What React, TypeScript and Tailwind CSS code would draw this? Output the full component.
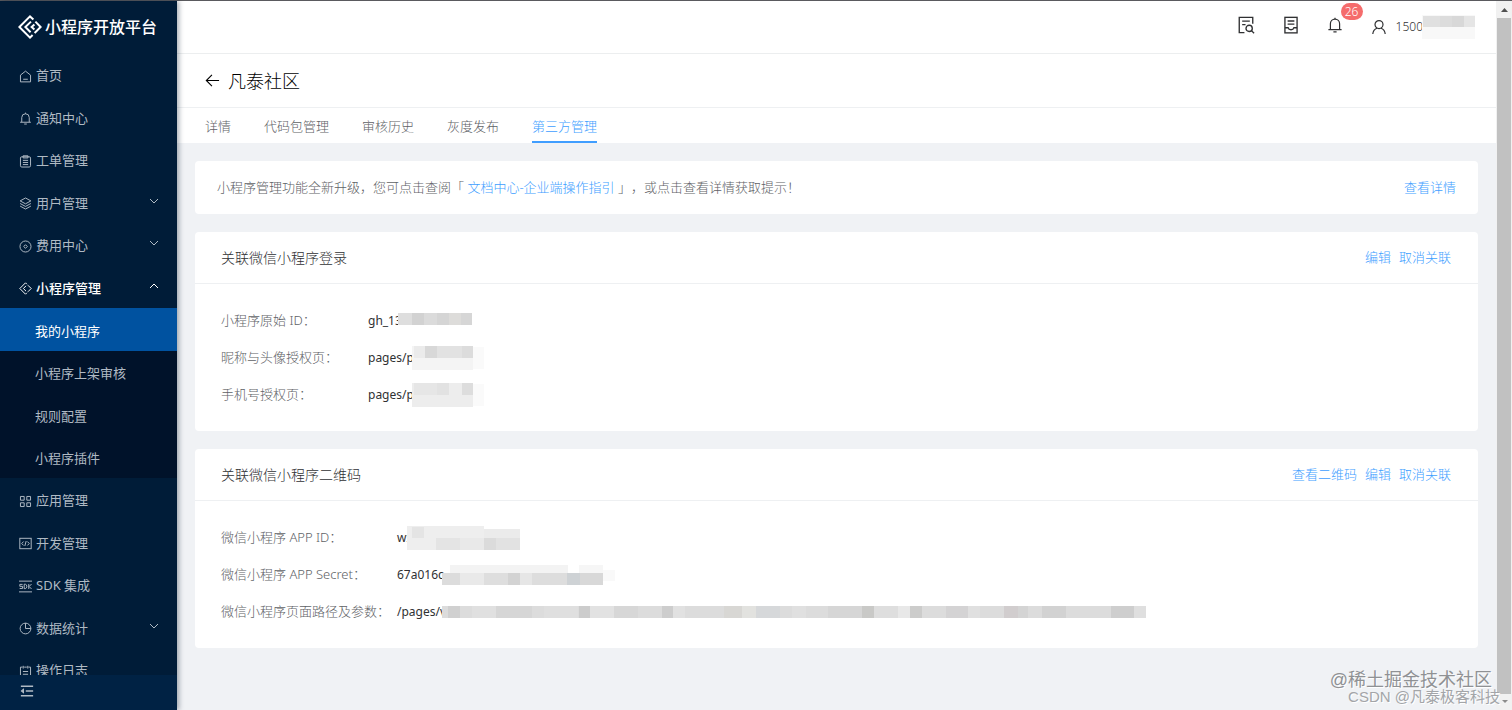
import type { ReactNode } from 'react';

type IconName =
  | 'home' | 'bell' | 'clipboard' | 'layers' | 'target' | 'diamond' | 'grid'
  | 'code' | 'sdk' | 'pie' | 'calendar' | 'collapse' | 'docSearch' | 'docInbox' | 'user' | 'back';

const paths: Record<IconName, ReactNode> = {
  home: (
    <>
      <path d="M1.8 6.3 8 1.4l6.2 4.9v8.3H1.8z" />
      <path d="M5.2 11.4h5.6" />
    </>
  ),
  bell: (
    <>
      <path d="M3.4 12.4V6.8a4.6 4.6 0 0 1 9.2 0v5.6" />
      <path d="M1.4 12.6h13.2M6.4 14.8h3.2M8 .8v1.4" />
    </>
  ),
  clipboard: (
    <>
      <rect x="1.8" y="2.2" width="12.4" height="12.6" rx="1.6" />
      <path d="M5 1h6v2.6H5zM4.8 6.6h6.4M4.8 9.2h6.4M4.8 11.8h6.4" />
    </>
  ),
  layers: (
    <>
      <path d="M8 1.2 14.6 4.8 8 8.4 1.4 4.8z" />
      <path d="M1.4 8 8 11.6 14.6 8M1.4 11.2 8 14.8l6.6-3.6" />
    </>
  ),
  target: (
    <>
      <circle cx="8" cy="8" r="6.8" />
      <path d="M8 5.8 10.2 8 8 10.2 5.8 8z" />
    </>
  ),
  diamond: (
    <>
      <path d="M9.8 2.8 8 1 1 8l7 7 1.800-1.800" />
      <path d="M8.600 4.800 5.400 8l3.200 3.200M11 4l4 4-4 4" />
    </>
  ),
  grid: (
    <path d="M1.8 1.8h4.6v4.6H1.8zM9.6 1.8h4.6v4.6H9.6zM1.8 9.6h4.6v4.6H1.8zM9.6 9.6h4.6v4.6H9.6z" />
  ),
  code: (
    <>
      <rect x="1" y="1.6" width="14" height="12.8" />
      <path d="M5.6 5.6 3.4 8l2.2 2.4M10.4 5.6 12.6 8l-2.2 2.4M8.8 5l-1.6 6" />
    </>
  ),
  sdk: (
    <>
      <path d="M0 1.4h16M0 14.6h16" />
      <path d="M4.4 5.4H1v2.4h3.4v2.6H.8M6.4 5.2v5.4h1.4c2.4 0 2.4-5.4 0-5.4zM12 5v6M15.4 5 12.4 8l3 3" />
    </>
  ),
  pie: (
    <>
      <path d="M8 1.400A6.600 6.600 0 1 0 14.600 8H8z" />
      <path d="M8 1.400A6.600 6.600 0 0 1 14.600 8" />
    </>
  ),
  calendar: (
    <>
      <path d="M4.4 2.6H1.8v12.6h12.4V2.6h-2.6M6.4 2.6h3.2" />
      <path d="M5.2 1v3.4M10.8 1v3.4M4.8 8h6.4M4.8 11.4h6.4" />
    </>
  ),
  collapse: (
    <>
      <path d="M1 2.500h14M6.600 8H15M1 13.500h14" strokeWidth="1.600" />
      <path d="M4 6 1.600 8 4 10z" fill="currentColor" />
    </>
  ),
  docSearch: (
    <>
      <path d="M6.6 14.8H2V1.2h12v5.6" />
      <path d="M4.6 4.6h6.8M4.6 7.6h3" />
      <circle cx="10.8" cy="11" r="2.8" />
      <path d="m12.8 13 2.4 2.4" />
    </>
  ),
  docInbox: (
    <>
      <rect x="2.600" y="1.2" width="10.800" height="13.8" />
      <path d="M5 4.4h6M5 7.2h6M2.600 10.400h2.800c.6 2.400 4.600 2.400 5.200 0h2.800" />
    </>
  ),
  user: (
    <>
      <circle cx="8" cy="5.6" r="4" />
      <path d="M1.8 15c.2-3 2-5 4.2-5.8M14.2 15c-.2-3-2-5-4.2-5.8" />
    </>
  ),
  back: <path d="M15 8H1.6M7.4 2 1.4 8l6 6" />,
};

function Icon({ name, className }: { name: IconName; className: string }) {
  return (
    <svg
      viewBox="0 0 16 16"
      className={className}
      fill="none"
      stroke="currentColor"
      strokeWidth="1.2"
      aria-hidden="true"
    >
      {paths[name]}
    </svg>
  );
}

interface MenuItem {
  icon: IconName;
  label: string;
  expandable?: boolean;
  children?: string[];
}

const menu: MenuItem[] = [
  { icon: 'home', label: '首页' },
  { icon: 'bell', label: '通知中心' },
  { icon: 'clipboard', label: '工单管理' },
  { icon: 'layers', label: '用户管理', expandable: true },
  { icon: 'target', label: '费用中心', expandable: true },
  {
    icon: 'diamond',
    label: '小程序管理',
    expandable: true,
    children: ['我的小程序', '小程序上架审核', '规则配置', '小程序插件'],
  },
  { icon: 'grid', label: '应用管理' },
  { icon: 'code', label: '开发管理' },
  { icon: 'sdk', label: 'SDK 集成' },
  { icon: 'pie', label: '数据统计', expandable: true },
  { icon: 'calendar', label: '操作日志' },
];

const tabs = ['详情', '代码包管理', '审核历史', '灰度发布', '第三方管理'];
const activeTab = '第三方管理';

// x, y, width, height, fill
type Block = [number, number, number, number, string];

interface MaskShape {
  width: number;
  height: number;
  blocks: Block[];
}

const masks: Record<string, MaskShape> = {
  phone: {
    width: 54,
    height: 24,
    blocks: [
      [0, 0, 53, 24, '#f8f8f8'], [1, 1, 17, 11, '#e0e0e0'], [18, 1, 12, 11, '#dcdcdc'],
      [30, 1, 12, 11, '#d8d8d8'], [42, 1, 11, 11, '#e5e5e5'],
    ],
  },
  origin: {
    width: 75,
    height: 12,
    blocks: [
      [0, 0, 14, 12, '#dedede'], [14, 0, 12, 12, '#d2d2d2'], [26, 0, 13, 12, '#dbdbdb'],
      [39, 0, 12, 12, '#d5d5d5'], [51, 0, 12, 12, '#dddcda'], [63, 0, 11, 12, '#d6d6d6'],
    ],
  },
  profile: {
    width: 72,
    height: 24,
    blocks: [
      [0, 0, 61, 24, '#f4f4f4'], [61, 1, 11, 22, '#fafafa'], [2, 0, 11, 12, '#ebebeb'],
      [13, 0, 12, 12, '#d8d8d8'], [25, 0, 25, 12, '#e2e2e2'], [50, 0, 11, 12, '#dcdcdc'],
    ],
  },
  mobile: {
    width: 72,
    height: 24,
    blocks: [
      [0, 0, 61, 24, '#ededed'], [61, 1, 11, 22, '#fafafa'], [2, 0, 23, 12, '#e6e6e6'],
      [25, 0, 12, 12, '#e2e2e2'], [50, 0, 11, 12, '#dddddd'],
    ],
  },
  appId: {
    width: 114,
    height: 24,
    blocks: [
      [0, 0, 77, 24, '#eeeeee'], [77, 3, 36, 21, '#ebebeb'], [5, 1, 12, 11, '#e4e4e4'],
      [29, 12, 24, 12, '#e4e4e4'], [53, 12, 24, 12, '#e9e9e9'], [77, 12, 12, 12, '#dbdbdb'],
      [89, 12, 24, 12, '#e2e2e2'],
    ],
  },
  secret: {
    width: 174,
    height: 20,
    blocks: [
      [8, 0, 118, 20, '#f3f3f3'], [137, 0, 24, 12, '#f6f6f6'], [161, 5, 12, 11, '#f9f9f9'],
      [0, 8, 18, 12, '#dcdcdc'], [18, 8, 24, 12, '#e9e9e9'], [42, 8, 24, 12, '#dedede'],
      [66, 8, 12, 12, '#d3d3d3'], [78, 8, 12, 12, '#e6e6e6'], [90, 8, 35, 12, '#dddddd'],
      [125, 8, 13, 12, '#ced2d5'], [138, 8, 23, 12, '#d8d8d8'],
    ],
  },
  path: {
    width: 704,
    height: 12,
    blocks: [
      [0, 0, 704, 12, '#dcdcdc'], [6, 0, 12, 12, '#d0d0d0'], [30, 0, 24, 12, '#e0e0e0'],
      [54, 0, 36, 12, '#d6d6d6'], [102, 0, 34, 12, '#dfdfdf'], [137, 0, 11, 12, '#cccccc'],
      [148, 0, 24, 12, '#e2e2e2'], [172, 0, 24, 12, '#d7d7d7'], [220, 0, 11, 12, '#cdcdcd'],
      [231, 0, 12, 12, '#e1e1e1'], [282, 0, 18, 12, '#d8d7d4'], [300, 0, 14, 12, '#e2e2df'],
      [314, 0, 24, 12, '#d6d8da'], [350, 0, 14, 12, '#e0e0e0'], [386, 0, 34, 12, '#d6d6d6'],
      [420, 0, 12, 12, '#c9c9c7'], [432, 0, 24, 12, '#dedede'], [456, 0, 12, 12, '#e8e8e8'],
      [468, 0, 12, 12, '#cccccb'], [504, 0, 22, 12, '#d4d3d4'], [526, 0, 12, 12, '#e0e0e0'],
      [562, 0, 14, 12, '#d1cdce'], [576, 0, 10, 12, '#d4d4d4'], [600, 0, 24, 12, '#d2d2d2'],
      [669, 0, 23, 12, '#cecece'], [692, 0, 12, 12, '#dfdfdf'],
    ],
  },
};

// Redacted part of a value, drawn over the tail of its visible text
function Mask({ name, className }: { name: string; className: string }) {
  const { width, height, blocks } = masks[name];
  return (
    <svg width={width} height={height} className={`relative shrink-0 ${className}`} aria-hidden="true">
      {blocks.map(([x, y, w, h, fill], i) => (
        <rect key={i} x={x} y={y} width={w} height={h} fill={fill} />
      ))}
    </svg>
  );
}

function Sidebar() {
  return (
    <aside className="relative z-10 flex w-[177px] shrink-0 flex-col bg-[#001c38] text-[13px] text-[#b0bac4] shadow-[2px_0_5px_rgba(0,21,41,0.35)]">
      <div className="flex h-[52px] shrink-0 items-center gap-[3px] pl-[18px] text-white">
        <svg viewBox="0 0 24 24" className="size-6" fill="none" stroke="currentColor" strokeWidth="2" aria-hidden="true">
          <path d="M15.400 4.600 12 1.400 1.400 12 12 22.600l2.600-2.600" />
          <path d="M13 6.600 7.400 12l5.200 5.200M16.400 9.400 13.600 12l2.800 2.600" />
          <path d="M17.400 6.600 22.600 12l-6 6" />
        </svg>
        <span className="text-base font-medium">小程序开放平台</span>
      </div>

      <nav className="min-h-0 flex-1 overflow-hidden">
        <ul>
          {menu.map((item) => (
            <li key={item.label} className="group">
              <a
                href="#"
                className={`flex h-[42px] items-center gap-1 pt-1 pr-[18px] pl-[19px] group-even:h-[43px] ${
                  item.children ? 'font-medium text-white' : ''
                }`}
              >
                <Icon name={item.icon} className="size-[13px] shrink-0" />
                <span className="flex-1">{item.label}</span>
                {item.expandable && (
                  <svg viewBox="0 0 10 10" className="mb-1.5 size-2.5" fill="none" stroke="currentColor" aria-hidden="true">
                    <path d={item.children ? 'M1 7l4-4 4 4' : 'M1 3l4 4 4-4'} />
                  </svg>
                )}
              </a>
              {item.children && (
                <ul className="bg-[#00122a]">
                  {item.children.map((child, i) => (
                    <li key={child} className="h-[42px] odd:h-[43px]">
                      <a
                        href="#"
                        className={`flex h-full items-center pt-1 pl-[35px] ${i === 0 ? 'bg-[#0052a0] text-white' : ''}`}
                      >
                        {child}
                      </a>
                    </li>
                  ))}
                </ul>
              )}
            </li>
          ))}
        </ul>
      </nav>

      <div className="flex h-[35px] shrink-0 items-center bg-[#002244] pb-[3px] pl-5">
        <button type="button" aria-label="收起菜单">
          <Icon name="collapse" className="size-3.5" />
        </button>
      </div>
    </aside>
  );
}

function Header() {
  return (
    <header className="flex h-[53px] shrink-0 items-center justify-end border-b border-[#eceeef] bg-white pr-5 text-[#303133]">
      <button type="button" aria-label="审核查询" className="mr-[27px] pb-1">
        <Icon name="docSearch" className="size-[18px]" />
      </button>
      <button type="button" aria-label="工单" className="mr-[27px] pb-1">
        <Icon name="docInbox" className="size-[18px]" />
      </button>
      <button type="button" aria-label="通知" className="relative mr-7 pb-1">
        <Icon name="bell" className="size-4" />
        <span className="absolute -top-3.5 left-3.5 flex h-[17px] w-[22px] items-center justify-center rounded-full bg-[#f56c6c] text-xs text-white">
          26
        </span>
      </button>
      <button type="button" className="flex items-center text-xs">
        <Icon name="user" className="mr-[9px] size-4" />
        1500
        <Mask name="phone" className="-ml-px" />
      </button>
    </header>
  );
}

interface CardRow {
  label: string;
  value: string;
  mask: string;
  maskClass: string;
}

interface InfoCardProps {
  title: string;
  actions: string[];
  rows: CardRow[];
  labelClass: string;
}

function InfoCard({ title, actions, rows, labelClass }: InfoCardProps) {
  return (
    <section className="rounded-sm bg-white">
      <div className="flex h-[52px] items-center justify-between border-b border-[#eef0f2] pr-[27px] pl-[26px]">
        <h2 className="text-sm text-[#303133]">{title}</h2>
        <div className="flex gap-2 text-[#409eff]">
          {actions.map((action) => (
            <a key={action} href="#">{action}</a>
          ))}
        </div>
      </div>
      <dl className="px-[26px] py-[18px]">
        {rows.map((row) => (
          <div key={row.label} className="flex h-[37px] items-center">
            <dt className={`shrink-0 text-[#606266] ${labelClass}`}>{row.label}</dt>
            <dd className="flex items-center text-xs font-normal text-[#303133]">
              {row.value}
              <Mask name={row.mask} className={row.maskClass} />
            </dd>
          </div>
        ))}
      </dl>
    </section>
  );
}

function Scrollbar() {
  return (
    <div className="flex w-4 shrink-0 flex-col items-center bg-[#f1f1f1]" aria-hidden="true">
      <svg viewBox="0 0 15 17" className="h-[17px] w-[15px]" fill="#505050">
        <path d="M4 11h7L7.500 7z" />
      </svg>
      <div className="w-[14px] flex-1 bg-[#c1c1c1]" />
      <svg viewBox="0 0 15 16" className="h-4 w-[15px]" fill="#8c8c8c">
        <path d="M5 6h6L8 9z" />
      </svg>
    </div>
  );
}

export default function App() {
  return (
    <div className="relative flex h-screen flex-col border-t border-[#5a5a5e] bg-[#f0f2f5] font-['Noto_Sans','Noto_Sans_CJK_SC',sans-serif] text-[13px]">
      <div className="flex min-h-0 flex-1">
        <Sidebar />

        <main className="flex min-w-0 flex-1 flex-col overflow-hidden font-light">
          <Header />

          {/* Page title */}
          <div className="flex h-[54px] shrink-0 items-center gap-2 border-b border-[#eef0f2] bg-white pl-7 text-black">
            <button type="button" aria-label="返回">
              <Icon name="back" className="size-[15px]" />
            </button>
            <h1 className="text-lg">凡泰社区</h1>
          </div>

          {/* Tabs */}
          <nav className="flex h-[35px] shrink-0 gap-[33px] bg-white pl-7 text-[#606266]">
            {tabs.map((tab) => (
              <a
                key={tab}
                href="#"
                className={`flex items-center border-b-2 pt-1 ${
                  tab === activeTab ? 'border-[#409eff] text-[#409eff]' : 'border-transparent'
                }`}
              >
                {tab}
              </a>
            ))}
          </nav>

          <div className="flex flex-col gap-[18px] p-[18px]">
            <section className="flex h-[53px] items-center justify-between rounded-sm bg-white px-[22px] text-[#606266]">
              <p className="[text-spacing-trim:space-all]">
                小程序管理功能全新升级，您可点击查阅「{' '}
                <a href="#" className="text-[#409eff]">文档中心-企业端操作指引</a>
                {' '}」，或点击查看详情获取提示！
              </p>
              <a href="#" className="text-[#409eff]">查看详情</a>
            </section>

            <InfoCard
              title="关联微信小程序登录"
              actions={['编辑', '取消关联']}
              labelClass="w-[147px]"
              rows={[
                { label: '小程序原始 ID：', value: 'gh_13', mask: 'origin', maskClass: '-ml-1 mb-1' },
                { label: '昵称与头像授权页：', value: 'pages/p', mask: 'profile', maskClass: '-ml-0.5' },
                { label: '手机号授权页：', value: 'pages/p', mask: 'mobile', maskClass: '-ml-0.5' },
              ]}
            />

            <InfoCard
              title="关联微信小程序二维码"
              actions={['查看二维码', '编辑', '取消关联']}
              labelClass="w-[176px]"
              rows={[
                { label: '微信小程序 APP ID：', value: 'wx', mask: 'appId', maskClass: '-ml-1.5' },
                { label: '微信小程序 APP Secret：', value: '67a016c', mask: 'secret', maskClass: '-ml-0.5' },
                { label: '微信小程序页面路径及参数：', value: '/pages/v', mask: 'path', maskClass: '-ml-1' },
              ]}
            />
          </div>
        </main>

        <Scrollbar />
      </div>

      {/* Watermarks */}
      <div className="pointer-events-none absolute right-3 bottom-0 z-20 flex flex-col items-end font-['Liberation_Sans','Noto_Sans_CJK_SC',sans-serif] text-[#8f9194]">
        <span className="mr-2 text-lg leading-4 [text-shadow:1px_1px_0_#ffffff]">@稀土掘金技术社区</span>
        <span className="mb-1 text-[15px] leading-[18px] text-[#a3a5a8] [text-shadow:1px_1px_0_#ffffff]">CSDN @凡泰极客科技</span>
      </div>
    </div>
  );
}
